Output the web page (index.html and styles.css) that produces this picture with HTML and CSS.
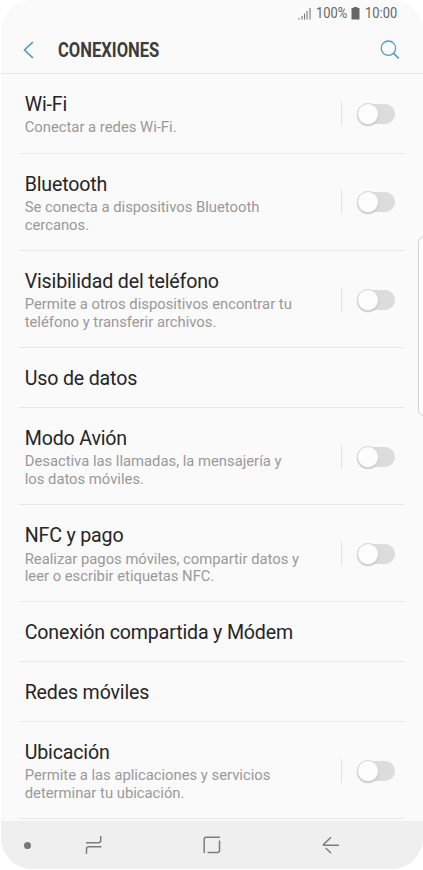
FILE: index.html
```html
<!DOCTYPE html>
<html lang="es">
<head>
    <meta charset="UTF-8">
    <meta name="viewport" content="width=device-width, initial-scale=1.0">
    <title>Conexiones</title>
    <link rel="stylesheet" href="styles.css">
</head>
<body>
    <div class="phone">
        <div class="status-bar">
            <svg class="signal" width="13" height="13" viewBox="0 0 13 13">
                <path d="M1 12.5V11M4 12.5V9M6.5 12.5V6.5M9 12.5V4M12 12.5V1" fill="none" stroke="#777" stroke-width="1.1"/>
            </svg>
            <span class="status-text percent">100%</span>
            <svg class="battery" width="9" height="13" viewBox="0 0 9 13">
                <path d="M2.5 0h4v1H8.5v11.5H0.5V1h2z" fill="#666"/>
            </svg>
            <span class="status-text time">10:00</span>
        </div>

        <header class="header">
            <svg class="back-icon" width="12" height="18" viewBox="0 0 12 18">
                <path d="M10.8 1.2L2.5 9l8.3 7.8" fill="none" stroke="#4b9fc4" stroke-width="1.6"/>
            </svg>
            <h1><span>CONEXIONES</span></h1>
            <svg class="search-icon" width="20" height="20" viewBox="0 0 20 20">
                <circle cx="8.4" cy="8.2" r="7.2" fill="none" stroke="#4b9fc4" stroke-width="1.3"/>
                <path d="M13.5 13.3L18.8 18.3" fill="none" stroke="#4b9fc4" stroke-width="1.6"/>
            </svg>
        </header>

        <main class="list">
            <div class="row">
                <div class="text">
                    <h2>Wi-Fi</h2>
                    <p>Conectar a redes Wi-Fi.</p>
                </div>
                <div class="switch"><span class="track"><span class="knob"></span></span></div>
            </div>
            <div class="row">
                <div class="text">
                    <h2>Bluetooth</h2>
                    <p>Se conecta a dispositivos Bluetooth<br>cercanos.</p>
                </div>
                <div class="switch"><span class="track"><span class="knob"></span></span></div>
            </div>
            <div class="row">
                <div class="text">
                    <h2>Visibilidad del teléfono</h2>
                    <p>Permite a otros dispositivos encontrar tu<br>teléfono y transferir archivos.</p>
                </div>
                <div class="switch"><span class="track"><span class="knob"></span></span></div>
            </div>
            <div class="row">
                <div class="text">
                    <h2>Uso de datos</h2>
                </div>
            </div>
            <div class="row">
                <div class="text">
                    <h2>Modo Avión</h2>
                    <p>Desactiva las llamadas, la mensajería y<br>los datos móviles.</p>
                </div>
                <div class="switch"><span class="track"><span class="knob"></span></span></div>
            </div>
            <div class="row">
                <div class="text">
                    <h2>NFC y pago</h2>
                    <p>Realizar pagos móviles, compartir datos y<br>leer o escribir etiquetas NFC.</p>
                </div>
                <div class="switch"><span class="track"><span class="knob"></span></span></div>
            </div>
            <div class="row">
                <div class="text">
                    <h2>Conexión compartida y Módem</h2>
                </div>
            </div>
            <div class="row">
                <div class="text">
                    <h2>Redes móviles</h2>
                </div>
            </div>
            <div class="row">
                <div class="text">
                    <h2>Ubicación</h2>
                    <p>Permite a las aplicaciones y servicios<br>determinar tu ubicación.</p>
                </div>
                <div class="switch"><span class="track"><span class="knob"></span></span></div>
            </div>
        </main>

        <nav class="nav-bar">
            <span class="dot"></span>
            <svg class="recents" width="18" height="20" viewBox="0 0 18 20">
                <path d="M1 7.7H13.5Q15.7 7.7 15.7 5.5V1M16.5 11.8H3.7Q1.5 11.8 1.5 14V18.7" fill="none" stroke="#7c7c7c" stroke-width="1.5"/>
            </svg>
            <svg class="home" width="18" height="18" viewBox="0 0 18 18">
                <path d="M1.2 17V3.2Q1.2 1.2 3.2 1.2H17M16.5 4.5V14.5Q16.5 16.5 14.5 16.5H4.5" fill="none" stroke="#7c7c7c" stroke-width="1.5"/>
            </svg>
            <svg class="back" width="18" height="18" viewBox="0 0 18 18">
                <path d="M17 9.2H2Q0.7 9.2 1.7 8.3L9 1.2M3.7 12L9 17" fill="none" stroke="#7c7c7c" stroke-width="1.5"/>
            </svg>
        </nav>

        <div class="edge-handle"></div>
    </div>
</body>
</html>
```

FILE: styles.css
```css
* {
    box-sizing: border-box;
}
body {
    margin: 0;
    background: white;
    font-family: Roboto, sans-serif;
}
h1, h2, p {
    margin: 0;
    font-weight: 400;
}
svg {
    display: block;
    flex: none;
}
.phone {
    position: relative;
    display: flex;
    flex-direction: column;
    width: 422px;
    height: 870px;
    margin-left: 1px;
    padding-bottom: 1px;
    overflow: hidden;
}
.phone::before {
    content: "";
    position: absolute;
    inset: 0 0 1px;
    z-index: -1;
    border-radius: 31px;
    background: #fafafa;
}
.status-bar {
    display: flex;
    align-items: center;
    height: 27px;
    padding-left: 297px;
}
.status-text {
    font-size: 14.5px;
    color: #666;
    white-space: nowrap;
    transform: scaleX(0.89);
    transform-origin: left;
}
.percent {
    width: 31px;
    margin-left: 5px;
}
.battery {
    margin-left: 4px;
}
.time {
    width: 33px;
    margin-left: 5px;
}
.header {
    display: flex;
    align-items: center;
    height: 47px;
    padding: 0 23px 0 21px;
    border-bottom: 1px solid #e6e6e6;
}
.header h1 {
    flex: 1;
    margin-left: 24px;
    font-size: 19.5px;
    font-weight: 700;
    color: #3c3c3c;
}
.header h1 span {
    display: inline-block;
    transform: scaleX(0.85);
    transform-origin: left;
}
.list {
    flex: none;
    margin: 0 19px 0 18px;
}
.row {
    display: flex;
    align-items: center;
    justify-content: space-between;
    padding: 18.8px 9px 16px 5.7px;
    border-bottom: 1px solid #e8e8e8;
}
.row h2 {
    font-size: 19.6px;
    line-height: 24px;
    letter-spacing: -0.16px;
    color: #252525;
    white-space: nowrap;
}
.row p {
    margin-top: 2.6px;
    font-size: 14.8px;
    line-height: 17.4px;
    color: #999;
    white-space: nowrap;
}
.switch {
    display: flex;
    align-items: center;
    height: 24px;
    margin-bottom: 2px;
    padding-left: 15px;
    border-left: 1px solid #e2e2e2;
}
.track {
    display: block;
    width: 38px;
    height: 20px;
    border-radius: 10px;
    background: #dcdcdc;
}
.knob {
    display: block;
    width: 22px;
    height: 22px;
    margin-top: -1px;
    border: 1px solid #d6d6d6;
    border-radius: 50%;
    background: #fdfdfd;
    box-shadow: 0 1px 1px #c4c4c4;
}
.nav-bar {
    display: flex;
    align-items: center;
    height: 48px;
    margin-top: auto;
    padding-left: 22.5px;
    border-radius: 0 0 31px 31px;
    background: #efefef;
}
.dot {
    width: 7px;
    height: 7px;
    border-radius: 50%;
    background: #777;
}
.recents {
    margin-left: 54.5px;
}
.home {
    margin-left: 100px;
}
.back {
    margin-left: 101px;
}
.edge-handle {
    position: absolute;
    top: 236px;
    right: -8px;
    width: 13px;
    height: 180px;
    border: 1px solid #d0d0d0;
    border-radius: 6px;
    background: white;
}
```
